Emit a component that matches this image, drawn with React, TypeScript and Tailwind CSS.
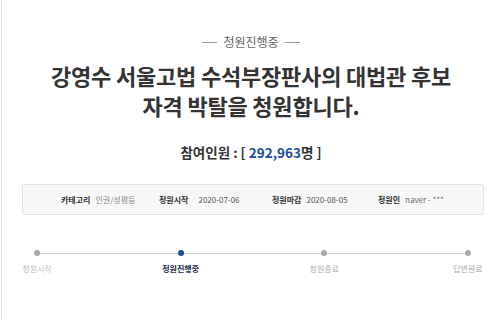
const FONT = { fontFamily: '"Noto Sans CJK KR", "Noto Sans", sans-serif' };

const INFO = [
  { label: "카테고리", value: "인권/성평등", w: "w-[98px]", gap: "gap-[5px]", tone: "text-[#888]" },
  { label: "청원시작", value: "2020-07-06", w: "w-[113px]", gap: "gap-[10px]", tone: "text-[#555]" },
  { label: "청원마감", value: "2020-08-05", w: "w-[106px]", gap: "gap-[5px]", tone: "text-[#555]" },
  { label: "청원인", value: "naver - ***", w: "w-[80px]", gap: "gap-[5px]", tone: "text-[#666]" },
];

const STEPS = [
  { name: "청원시작", done: true },
  { name: "청원진행중", current: true },
  { name: "청원종료" },
  { name: "답변완료" },
];

export default function App() {
  return (
    <div className="h-[320px] w-[500px] overflow-hidden bg-white" style={FONT}>
      <div className="ml-px h-full border-l border-[#e4e4e4]">
        {/* status label */}
        <div className="flex items-center justify-center gap-[6px] pt-[35px] text-[12px] leading-[14px] text-[#666]">
          <span className="h-px w-[15px] bg-[#999]" />
          <span>청원진행중</span>
          <span className="h-px w-[15px] bg-[#999]" />
        </div>

        {/* title */}
        <h1 className="mt-[11px] text-center text-[22px] font-bold leading-[30px] tracking-[-0.2px] text-[#333]">
          강영수 서울고법 수석부장판사의 대법관 후보
          <br />
          자격 박탈을 청원합니다.
        </h1>

        {/* participants */}
        <p className="mt-[22px] text-center text-[13.5px] font-bold leading-[20px] text-[#333]">
          참여인원 : [ <span className="text-[#1b4d9b]">292,963</span>명 ]
        </p>

        {/* info box */}
        <div className="ml-[20px] mt-[22px] flex h-[31px] w-[462px] items-center rounded-[2px] border border-[#e2e2e2] bg-[#f7f7f7] pl-[38px] text-[8px] leading-none">
          {INFO.map((i) => (
            <div key={i.label} className={`flex shrink-0 ${i.w} ${i.gap}`}>
              <span className="font-bold text-[#333]">{i.label}</span>
              <span className={i.tone}>{i.value}</span>
            </div>
          ))}
        </div>

        {/* progress */}
        <div className="relative ml-[5px] mt-[33px] flex w-[491px] justify-between">
          <div className="absolute left-[30px] right-[30px] top-[5px] h-px bg-[#cfcfcf]" />
          {STEPS.map((s) => (
            <div key={s.name} className="relative flex w-[60px] flex-col items-center">
              <div className="flex h-[10px] items-center">
                <span
                  className={
                    s.current
                      ? "h-[6px] w-[6px] rounded-full bg-[#1b4d9b]"
                      : "h-[6px] w-[6px] rounded-full bg-[#a8a8a8]"
                  }
                />
              </div>
              <span
                className={
                  s.current
                    ? "mt-[5px] text-[8px] font-bold leading-[12px] text-[#1c2a4a]"
                    : s.done
                      ? "mt-[5px] text-[8px] leading-[12px] text-[#bbb]"
                      : "mt-[5px] text-[8px] leading-[12px] text-[#aaa]"
                }
              >
                {s.name}
              </span>
            </div>
          ))}
        </div>
      </div>
    </div>
  );
}
